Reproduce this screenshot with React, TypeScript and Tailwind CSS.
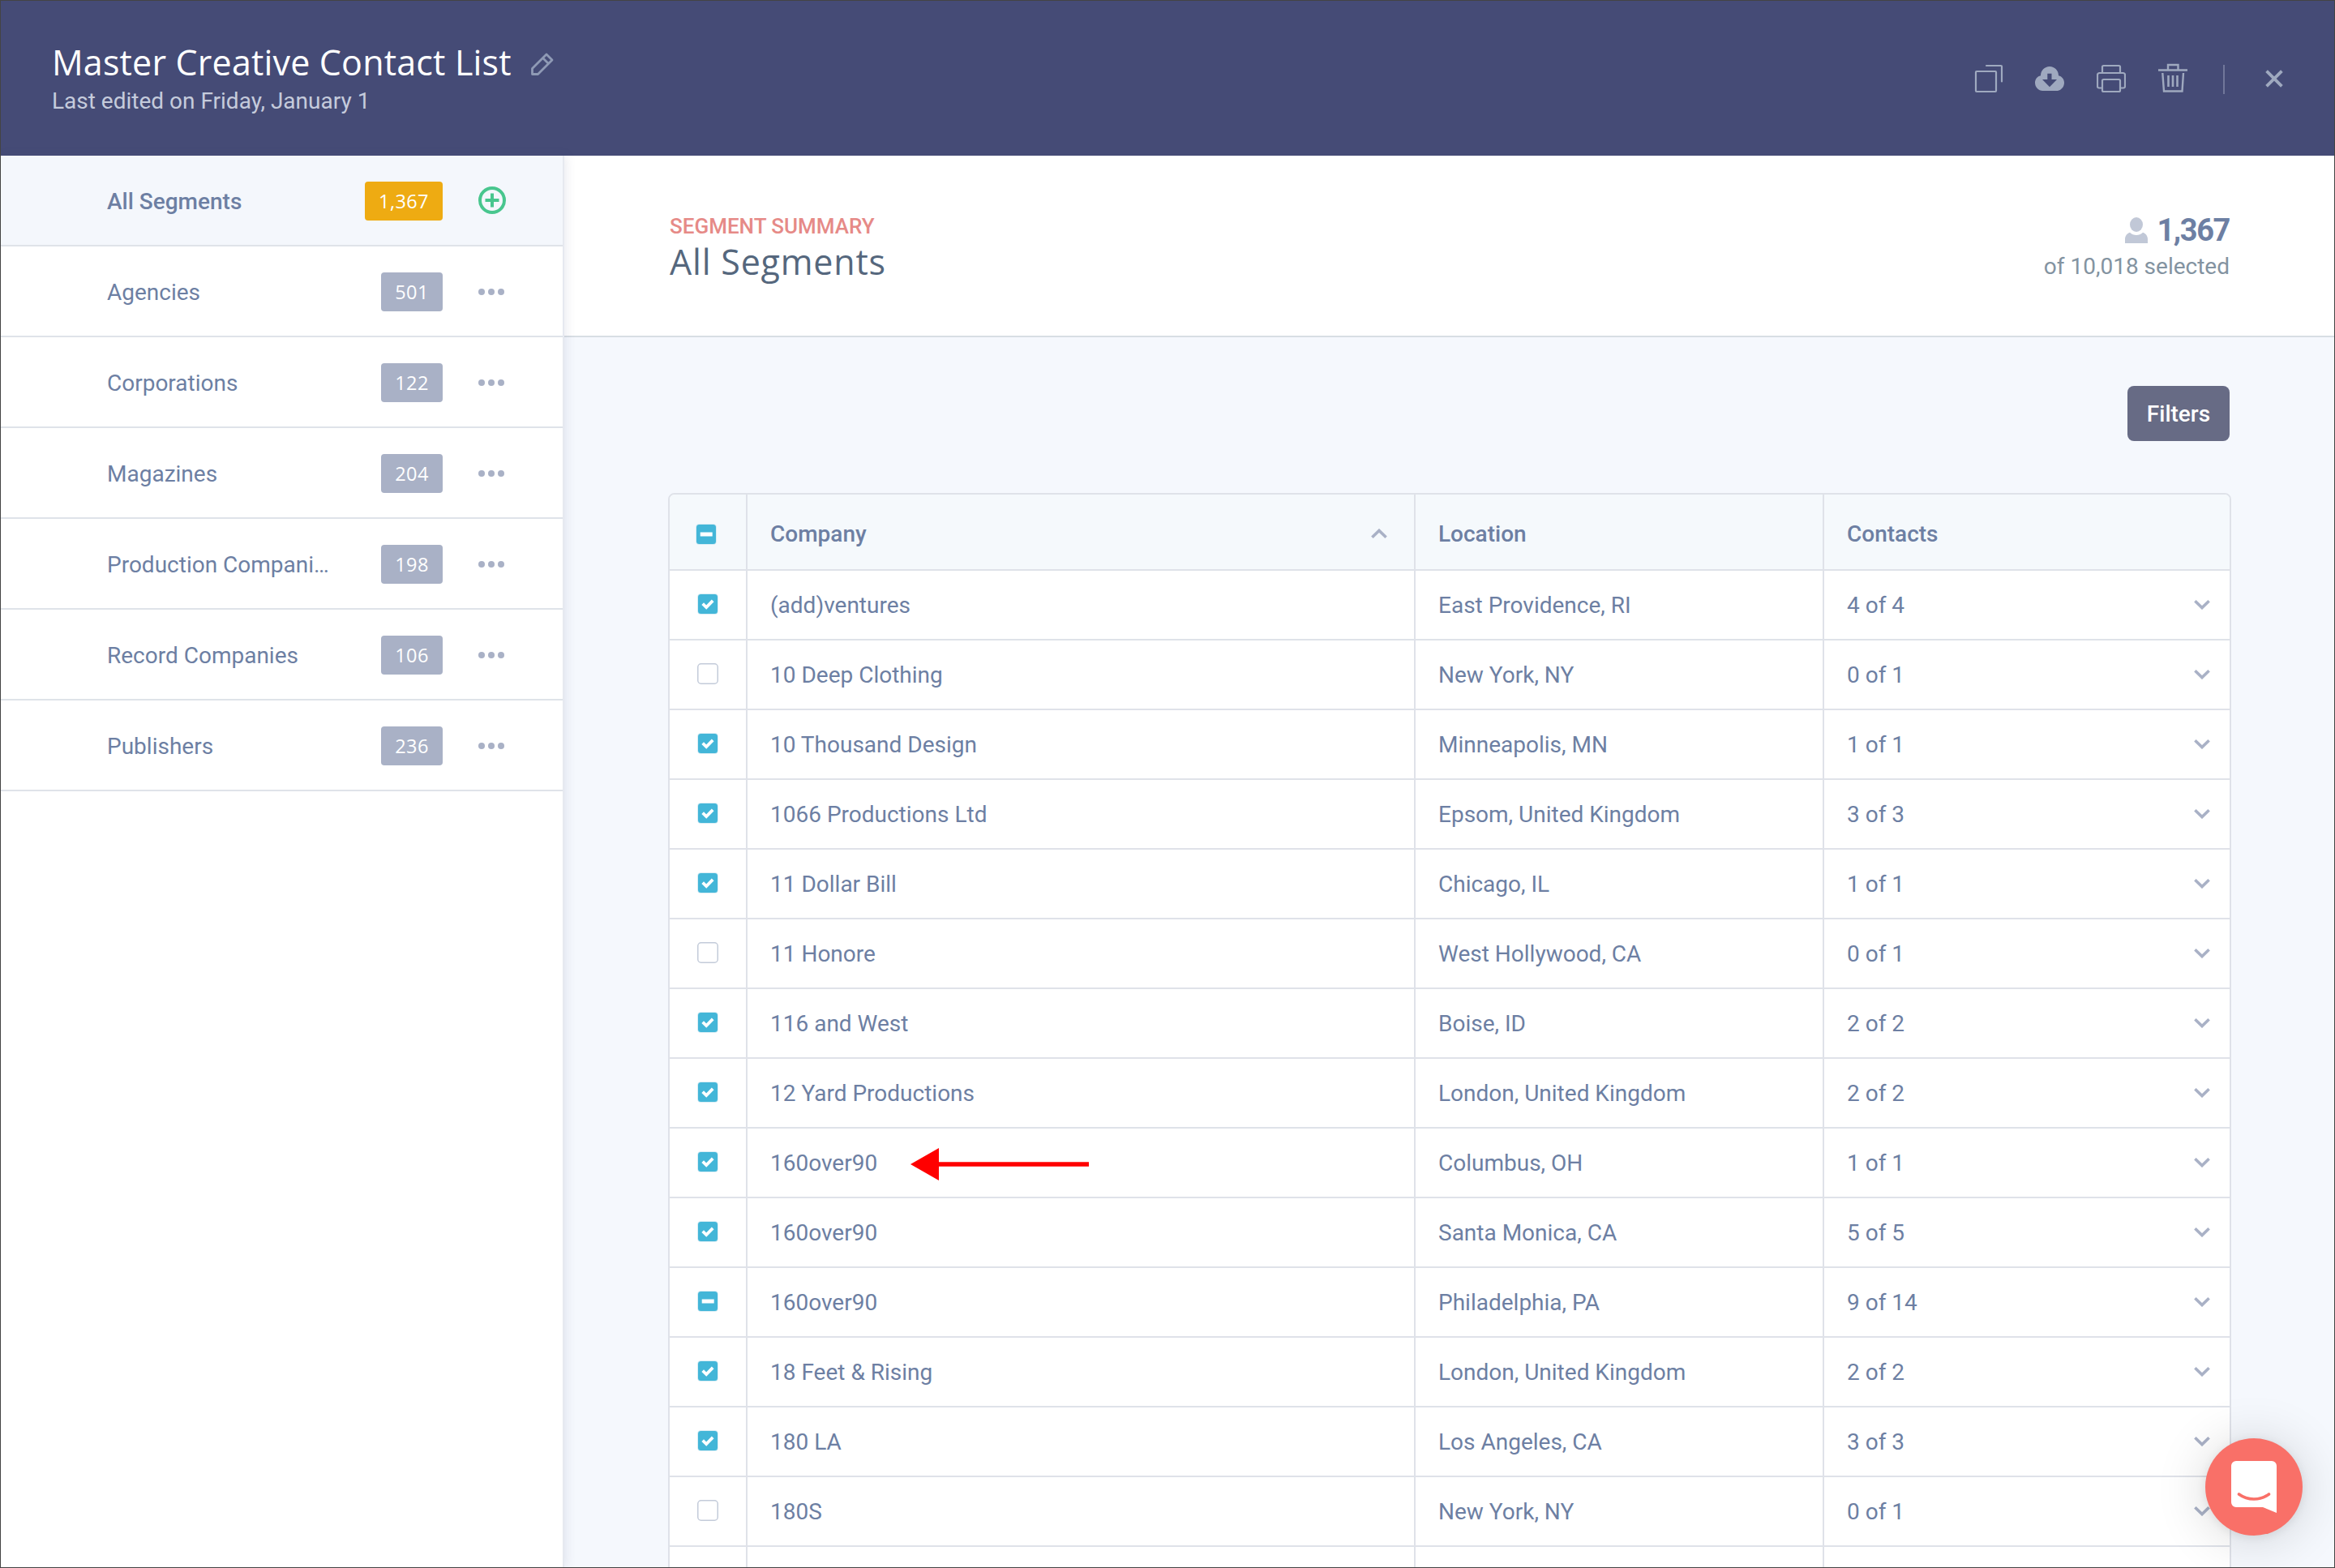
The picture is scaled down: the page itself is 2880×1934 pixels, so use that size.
import clsx from 'clsx';

const segments = [
  { name: 'All Segments', count: '1,367', active: true },
  { name: 'Agencies', count: '501' },
  { name: 'Corporations', count: '122' },
  { name: 'Magazines', count: '204' },
  { name: 'Production Compani…', count: '198' },
  { name: 'Record Companies', count: '106' },
  { name: 'Publishers', count: '236' },
];

type CheckState = 'all' | 'some' | 'none';

interface Company {
  name: string;
  location: string;
  contacts: string;
  state: CheckState;
  pointer?: boolean;
}

const companies: Company[] = [
  { name: '(add)ventures', location: 'East Providence, RI', contacts: '4 of 4', state: 'all' },
  { name: '10 Deep Clothing', location: 'New York, NY', contacts: '0 of 1', state: 'none' },
  { name: '10 Thousand Design', location: 'Minneapolis, MN', contacts: '1 of 1', state: 'all' },
  { name: '1066 Productions Ltd', location: 'Epsom, United Kingdom', contacts: '3 of 3', state: 'all' },
  { name: '11 Dollar Bill', location: 'Chicago, IL', contacts: '1 of 1', state: 'all' },
  { name: '11 Honore', location: 'West Hollywood, CA', contacts: '0 of 1', state: 'none' },
  { name: '116 and West', location: 'Boise, ID', contacts: '2 of 2', state: 'all' },
  { name: '12 Yard Productions', location: 'London, United Kingdom', contacts: '2 of 2', state: 'all' },
  { name: '160over90', location: 'Columbus, OH', contacts: '1 of 1', state: 'all', pointer: true },
  { name: '160over90', location: 'Santa Monica, CA', contacts: '5 of 5', state: 'all' },
  { name: '160over90', location: 'Philadelphia, PA', contacts: '9 of 14', state: 'some' },
  { name: '18 Feet & Rising', location: 'London, United Kingdom', contacts: '2 of 2', state: 'all' },
  { name: '180 LA', location: 'Los Angeles, CA', contacts: '3 of 3', state: 'all' },
  { name: '180S', location: 'New York, NY', contacts: '0 of 1', state: 'none' },
];

function Checkbox({ state }: { state: CheckState }) {
  if (state === 'none') {
    return (
      <svg className="size-[26px] shrink-0" viewBox="0 0 26 26" fill="none">
        <rect x="0.75" y="0.75" width="24.5" height="24.5" rx="4" fill="#fff" stroke="#c3cbd9" strokeWidth="1.5" />
      </svg>
    );
  }
  return (
    <svg className="size-[26px] shrink-0" viewBox="0 0 26 26" fill="none">
      <rect x="0.25" y="0.25" width="25.5" height="25.5" rx="4" fill="#cfe9f2" />
      <rect x="1" y="1" width="24" height="24" rx="3.5" fill="#43b6d8" />
      {state === 'all' ? (
        <path d="M6.7 12.6 11.2 17 19.2 8.8" stroke="#fff" strokeWidth="3.8" />
      ) : (
        <path d="M5.7 13h15" stroke="#fff" strokeWidth="5" />
      )}
    </svg>
  );
}

function Chevron({ up = false }: { up?: boolean }) {
  return (
    <svg className={clsx('h-3 w-5 shrink-0', up && 'rotate-180')} viewBox="0 0 20 12" fill="none">
      <path d="M1.4 1.3 10 9.6 18.6 1.3" stroke="#a9b1c6" strokeWidth="3.6" />
    </svg>
  );
}

function HeaderActions() {
  return (
    <div className="mt-[74px] flex h-11 items-center text-[#9fa9bf]">
      <svg className="h-9 w-9" viewBox="0 0 36 36" fill="none" stroke="currentColor" strokeWidth="2.2" strokeLinecap="round">
        <rect x="2" y="9" width="25" height="25" rx="1" />
        <path d="M15 2h18a1 1 0 0 1 1 1v18.5" />
      </svg>
      <svg className="ml-[39px] h-9 w-9" viewBox="0 0 36 36">
        <path fill="currentColor" d="M18 3c6.200 0 11 5 11 11.200C33 15 36 18.600 36 23c0 5.500-4.300 10-9.500 10h-17C4.300 33 0 28.500 0 23c0-4.400 3-8 7-8.800C7 8 11.800 3 18 3Z" />
        <path fill="#454b76" d="M15.300 11.700h5.200v7.300h6.500l-9 9.200L9 19h6.300Z" />
      </svg>
      <svg className="ml-10 h-9 w-9" viewBox="0 0 36 36" fill="none" stroke="currentColor" strokeWidth="2.2" strokeLinejoin="round">
        <path d="M7 10V3.500a1.500 1.500 0 0 1 1.500-1.500h19A1.500 1.500 0 0 1 29 3.500V10" />
        <path d="M7 29.500H3A2 2 0 0 1 1 27.500v-14A2.500 2.500 0 0 1 3.500 11h29a2.500 2.500 0 0 1 2.500 2.500v14a2 2 0 0 1-2 2h-4" />
        <rect x="7" y="19" width="22" height="15" rx="1.500" />
      </svg>
      <svg className="-mt-0.5 ml-10 h-9 w-9" viewBox="0 0 36 36" fill="none" stroke="currentColor" strokeWidth="2.400">
        <path d="M0 8.500h36M12 8V2h12.500v6" />
        <path d="M5.300 12 7 34.500h22.500L31 12" />
        <path d="M12.500 15v14M18 15v14M23.500 15v14" strokeWidth="2.600" />
      </svg>
      <div className="ml-11 mt-0.5 h-9 w-0.5 bg-[#71779a]" />
      <svg className="ml-[50px] h-[22px] w-[22px]" viewBox="0 0 22 22" fill="none" stroke="currentColor" strokeWidth="3.800">
        <path d="M1.600 1.600 20.400 20.400M20.400 1.600 1.600 20.400" />
      </svg>
    </div>
  );
}

function Sidebar() {
  return (
    <aside className="relative z-10 w-[695px] shrink-0 border-r-2 border-[#e6e9f0] bg-white shadow-[2px_0_12px_rgba(70,80,120,0.12)]">
      {segments.map((segment) => (
        <div
          key={segment.name}
          className={clsx(
            'flex h-28 items-center border-b-2 border-[#dfe3e9] pl-[131px] pr-[70px] pt-0.5',
            segment.active ? 'bg-[#f4f7fc] font-medium' : 'bg-white'
          )}
        >
          <span className="mt-0.5 w-[276px] whitespace-nowrap">{segment.name}</span>
          <div className="flex flex-1 justify-end">
            <span
              className={clsx(
                "flex h-12 items-center justify-center rounded font-['Open_Sans'] text-[23.5px] font-normal tracking-[0.4px] text-white",
                segment.active ? 'w-24 bg-[#eeab12]' : 'w-[76px] bg-[#a9b1c6]'
              )}
            >
              {segment.count}
            </span>
          </div>
          {segment.active ? (
            <svg className="mb-0.5 ml-11 size-[34px]" viewBox="0 0 34 34" fill="none" stroke="#48c68e" strokeWidth="4">
              <circle cx="17" cy="17" r="15" />
              <path d="M8.500 17h17M17 8.500v17" />
            </svg>
          ) : (
            <div className="ml-11 flex w-[34px] gap-1">
              <i className="size-2 rounded-full bg-[#a9b1c6]" />
              <i className="size-2 rounded-full bg-[#a9b1c6]" />
              <i className="size-2 rounded-full bg-[#a9b1c6]" />
            </div>
          )}
        </div>
      ))}
    </aside>
  );
}

function CompanyTable() {
  return (
    <div className="w-[1928px] rounded-t-lg border-2 border-[#dfe2e9] bg-white">
      <div className="flex h-[94px] rounded-t-md border-b-2 border-[#dfe2e9] bg-[#f5f9fc] font-medium">
        <div className="flex w-24 items-center border-r-2 border-[#dfe2e9] pl-8 pt-1.5">
          <Checkbox state="some" />
        </div>
        <div className="flex w-[824px] items-center justify-between border-r-2 border-[#dfe2e9] pl-7 pr-[33px] pt-1">
          <span className="mt-0.5">Company</span>
          <Chevron up />
        </div>
        <div className="flex w-[504px] items-center border-r-2 border-[#dfe2e9] pl-7 pt-1.5">Location</div>
        <div className="flex items-center pl-7 pt-1.5">Contacts</div>
      </div>
      {companies.map((company, i) => (
        <div key={i} className="flex h-[86px] border-b-2 border-[#dfe2e9]">
          <div className="flex w-24 items-center border-r-2 border-[#dfe2e9] pb-0.5 pl-[34px]">
            <Checkbox state={company.state} />
          </div>
          <div className="relative flex w-[824px] items-center border-r-2 border-[#dfe2e9] pl-7 pt-0.5">
            {company.name}
            {company.pointer && (
              <svg className="absolute left-[201px] top-6 h-10 w-[220px]" viewBox="0 0 220 40" fill="#f00">
                <path d="M0 20 35 0v40ZM35 17.200h185v5.600H35Z" />
              </svg>
            )}
          </div>
          <div className="flex w-[504px] items-center border-r-2 border-[#dfe2e9] pl-7 pt-0.5">{company.location}</div>
          <div className="flex flex-1 items-center justify-between pl-7 pr-6">
            <span className="mt-0.5">{company.contacts}</span>
            <Chevron />
          </div>
        </div>
      ))}
      <div className="flex h-[86px]">
        <div className="w-24 border-r-2 border-[#dfe2e9]" />
        <div className="w-[824px] border-r-2 border-[#dfe2e9]" />
        <div className="w-[504px] border-r-2 border-[#dfe2e9]" />
      </div>
    </div>
  );
}

export default function App() {
  return (
    <div className="relative flex h-[1934px] w-[2880px] flex-col overflow-hidden border border-[#444] bg-[#f5f8fd] font-[Roboto,sans-serif] text-[28px] leading-9 text-[#6d7fa3]">
      <header className="flex h-[191px] shrink-0 justify-between bg-[#454b76] pl-[63px] pr-[63px]">
        <div className="pt-12">
          <div className="flex h-14 items-center">
            <h1 className="whitespace-nowrap font-['Open_Sans'] text-[43px] leading-[56px] tracking-[0.18px] text-white">
              Master Creative Contact List
            </h1>
            <svg className="ml-6 mt-1 h-7 w-7" viewBox="0 0 28 28" fill="none" stroke="#8f9ab5" strokeWidth="2.800" strokeLinejoin="round">
              <path d="M1.500 26.500v-7L19 2l7 7L8.500 26.500ZM14.500 6.500l7 7" />
            </svg>
          </div>
          <p className="mt-0.5 text-[#c5cbdc]">Last edited on Friday, January 1</p>
        </div>
        <HeaderActions />
      </header>

      <div className="flex min-h-0 flex-1">
        <Sidebar />
        <main className="flex-1">
          <div className="flex h-56 justify-between border-b-2 border-[#d8dee4] bg-white pl-[130px] pr-[129px]">
            <div className="pt-[69px]">
              <div className="text-[26px] font-medium uppercase text-[#e68a87]">Segment Summary</div>
              <h2 className="-mt-0.5 font-['Open_Sans'] text-[43px] font-normal leading-[56px] tracking-[0.8px] text-[#55677d]">
                All Segments
              </h2>
            </div>
            <div className="flex flex-col items-end pt-[70px]">
              <div className="flex h-11 items-center text-[38px] font-bold tracking-[-1.4px]">
                <svg className="mr-[11px] h-8 w-7" viewBox="0 0 28 32" fill="#c1c8d7">
                  <ellipse cx="14" cy="9" rx="8" ry="9" />
                  <path d="M0 32v-5c0-4 2.500-7 6-8.200 4.500 4.300 11.500 4.300 16 0 3.500 1.200 6 4.200 6 8.200v5Z" />
                </svg>
                1,367
              </div>
              <div className="mt-[5px] text-[#8393a1]">of 10,018 selected</div>
            </div>
          </div>

          <div className="flex flex-col pl-32 pr-[127px] pt-[60px]">
            <button className="mb-16 mr-0.5 flex h-[68px] w-[126px] items-center justify-center self-end rounded-lg bg-[#676b85] pt-0.5 font-medium text-white">
              Filters
            </button>
            <CompanyTable />
          </div>
        </main>
      </div>

      {/* chat launcher */}
      <div className="absolute bottom-[39px] right-[39px] z-20 size-[120px] rounded-full bg-[#f97068] shadow-[0_2px_12px_rgba(0,0,0,0.08),0_4px_64px_rgba(0,0,0,0.16)]">
        <svg className="size-full" viewBox="0 0 120 120" fill="none">
          <path d="M38 28h44a6 6 0 0 1 6 6v58l-17-7H38a6 6 0 0 1-6-6V34a6 6 0 0 1 6-6Z" fill="#fff" />
          <path d="M41.500 69c11 8 26 8 37 0" stroke="#f97068" strokeWidth="3.600" strokeLinecap="round" />
        </svg>
      </div>
    </div>
  );
}
